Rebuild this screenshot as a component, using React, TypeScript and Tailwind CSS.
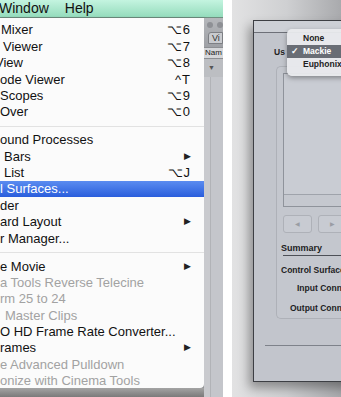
import React from 'react';

type Item = {
  label: string;
  x?: number;
  key?: string;
  arrow?: boolean;
  off?: boolean;
  hot?: boolean;
};

const groups: Item[][] = [
  [
    { label: 'Mixer', x: 1, key: '⌥6' },
    { label: 'Viewer', x: 3, key: '⌥7' },
    { label: 'View', x: -5, key: '⌥8' },
    { label: 'ode Viewer', x: 0, key: '^T' },
    { label: 'Scopes', x: 0, key: '⌥9' },
    { label: 'Over', x: 0, key: '⌥0' },
  ],
  [
    { label: 'ound Processes', x: 0 },
    { label: 'Bars', x: 4, arrow: true },
    { label: 'List', x: 4, key: '⌥J' },
    { label: 'l Surfaces...', x: 0, hot: true },
    { label: 'der', x: 0 },
    { label: 'ard Layout', x: 0, arrow: true },
    { label: 'r Manager...', x: 0 },
  ],
  [
    { label: 'e Movie', x: 0, arrow: true },
    { label: 'a Tools Reverse Telecine', x: 0, off: true },
    { label: 'rm 25 to 24', x: 0, off: true },
    { label: 'Master Clips', x: 5, off: true },
    { label: 'O HD Frame Rate Converter...', x: 0 },
    { label: 'rames', x: 0, arrow: true },
    { label: 'e Advanced Pulldown', x: 0, off: true },
    { label: 'onize with Cinema Tools', x: 0, off: true },
  ],
];

function MenuRow({ item }: { item: Item }) {
  const color = item.hot ? 'text-white' : item.off ? 'text-[#a2a2a2]' : 'text-[#111]';
  return (
    <div
      className={`flex h-[16.4px] items-center justify-between pr-[13px] ${color} ${
        item.hot ? 'bg-gradient-to-b from-[#5b8cf0] to-[#2a5ddc]' : ''
      }`}
    >
      <span className="whitespace-nowrap" style={{ marginLeft: item.x }}>
        {item.label}
      </span>
      {item.key && <span className="tracking-[1px]">{item.key}</span>}
      {item.arrow && <span className="text-[9px] text-[#222]">▶</span>}
    </div>
  );
}

function LeftShot() {
  return (
    <div className="flex w-[223px] flex-col bg-[#c6c8cc]">
      {/* menu bar */}
      <div className="flex h-[18px] items-center gap-[16px] border-b border-[#6f8f80] bg-gradient-to-b from-[#c4f4e0] to-[#94dcbc] text-[14px] text-[#111]">
        <span className="-ml-[1px]">Window</span>
        <span>Help</span>
      </div>
      <div className="flex flex-1">
        {/* menu */}
        <div className="flex w-[204px] flex-col">
          <div className="flex h-[370px] flex-col overflow-hidden rounded-br-[4px] bg-[#fbfbfb] pt-[4px] text-[13px] shadow-[1px_1px_3px_rgba(0,0,0,0.45)]">
            {groups.map((g, i) => (
              <div key={i} className="flex flex-col">
                {i > 0 && (
                  <div className="flex h-[11.5px] items-center">
                    <div className="h-px w-full bg-[#e2e2e2]" />
                  </div>
                )}
                {g.map((item) => (
                  <MenuRow key={item.label} item={item} />
                ))}
              </div>
            ))}
          </div>
          <div className="flex-1 bg-gradient-to-b from-[#a4a4a4] to-[#7a7a7a]" />
        </div>
        {/* window behind */}
        <div className="flex flex-1 flex-col">
          <div className="flex h-[29px] flex-col bg-gradient-to-b from-[#b5b7bb] to-[#9ea0a5]">
            <div className="mt-[4px] flex gap-[4px] pl-[3px]">
              <div className="h-[6px] w-[6px] rounded-full bg-[#8e9095]" />
              <div className="h-[6px] w-[6px] rounded-full bg-[#8e9095]" />
            </div>
            <div className="mt-[4px] ml-[4px] h-[12px] rounded-tl-[3px] border border-[#7d7f84] bg-[#c9cbcf] pl-[3px] text-[9px] leading-[10px] text-[#333]">
              Vi
            </div>
          </div>
          <div className="h-[12px] border-y border-[#8d8f93] bg-[#d6d7da] pl-[1px] text-[8px] leading-[10px] text-[#222]">
            Nam
          </div>
          <div className="flex h-[18px] items-center bg-[#bcbec2] pl-[4px] text-[7px] text-[#555]">▼</div>
          <div className="flex flex-1">
            <div className="w-[6px] bg-[#c9cace]" />
            <div className="w-px bg-[#b1b3b7]" />
            <div className="flex-1 bg-[#c4c6cb]" />
          </div>
        </div>
      </div>
    </div>
  );
}

function NavButton({ glyph }: { glyph: string }) {
  return (
    <div className="flex h-[18px] w-[29px] items-center justify-center rounded-[3px] border border-[#aeb1b8] bg-[#c8cbd2] text-[6px] text-[#9a9da4]">
      {glyph}
    </div>
  );
}

function RightShot() {
  return (
    <div className="flex flex-1 flex-col overflow-hidden bg-gradient-to-b from-[#e6e6e7] via-[#d6d6d8] to-[#8e8e90] font-['Liberation_Sans',sans-serif]">
      <div className="flex flex-1 bg-gradient-to-r from-[#e2e2e3] via-[#cfd0d2] to-[#a9aaad] pt-[20px] pl-[21px]">
        <div className="relative flex h-[362px] w-[120px] shrink-0 flex-col border-y border-l border-[#3d3f44] bg-[#c2c5cc] shadow-[-4px_6px_10px_rgba(0,0,0,0.35)]">
          <div className="h-[12px] border-b border-[#6d7078] bg-[#cdd0d6]" />
          <div className="mt-[13px] pl-[20px] text-[8.5px] font-bold leading-[12px] text-[#222]">Us</div>
          {/* inner panel */}
          <div className="mt-[8px] ml-[22px] flex h-[253px] flex-col rounded-l-[5px] border-y border-l border-[#aeb1b8] bg-[#c4c7ce] pt-[6px] pl-[6px]">
            <div className="flex h-[134px] flex-col border-y border-l border-[#8f939b] bg-[#c9ccd3]">
              <div className="flex-1" />
              <div className="h-[12px] border-t border-[#9fa3ab] bg-[#c5c8cf]" />
            </div>
            <div className="mt-[8px] flex gap-[6px]">
              <NavButton glyph="◀" />
              <NavButton glyph="▶" />
            </div>
            <div className="mt-[9px] border-b border-[#4d5057] pb-[1px] text-[9px] font-bold leading-[12px] text-[#1d1d1f]">
              <span className="-ml-[2px]">Summary</span>
            </div>
            <div className="mt-[8px] -ml-[2px] whitespace-nowrap text-[8.5px] font-bold leading-[12px] text-[#1d1d1f]">
              Control Surface
            </div>
            <div className="mt-[6px] ml-[14px] whitespace-nowrap text-[8.5px] font-bold leading-[12px] text-[#1d1d1f]">
              Input Connection
            </div>
            <div className="mt-[8px] ml-[7px] whitespace-nowrap text-[8.5px] font-bold leading-[12px] text-[#1d1d1f]">
              Output Connection
            </div>
          </div>
          <div className="mt-[26px] ml-[11px] h-px bg-[#7e828a]" />
          {/* popup menu over the dialog */}
          <div className="absolute top-[8px] left-[33px] flex h-[47px] w-[80px] flex-col rounded-[5px] bg-[#e9eaed]/95 py-[3px] text-[8.5px] font-bold leading-[13px] text-[#222] shadow-[0_2px_5px_rgba(0,0,0,0.35)]">
            <div className="pl-[16px]">None</div>
            <div className="flex bg-[#696d75] text-white">
              <span className="w-[16px] pl-[4px]">✓</span>
              <span>Mackie</span>
            </div>
            <div className="pl-[16px]">Euphonix</div>
          </div>
        </div>
      </div>
    </div>
  );
}

export default function App() {
  return (
    <div className="flex h-[397px] w-[341px] overflow-hidden bg-white font-['Liberation_Sans',sans-serif]">
      <LeftShot />
      <div className="w-[9px] bg-white" />
      <RightShot />
    </div>
  );
}
